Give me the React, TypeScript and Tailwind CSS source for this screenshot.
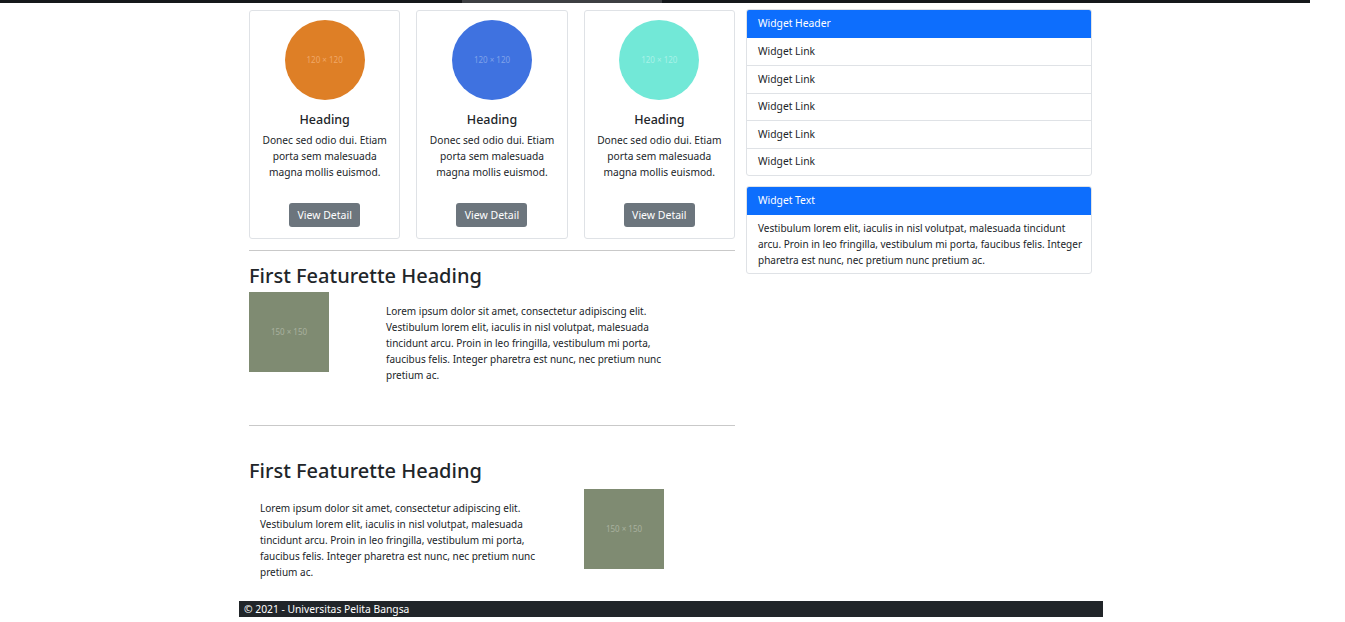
const font = { fontFamily: '"Noto Sans", "Open Sans", sans-serif' };

const circles = [
    { bg: 'bg-[#de7f26]', fg: 'text-[#f0a868]' },
    { bg: 'bg-[#3f72e0]', fg: 'text-[#7fa2ea]' },
    { bg: 'bg-[#72e8d7]', fg: 'text-[#a8f2e8]' },
];

const lorem =
    'Lorem ipsum dolor sit amet, consectetur adipiscing elit. Vestibulum lorem elit, iaculis in nisl volutpat, malesuada tincidunt arcu. Proin in leo fringilla, vestibulum mi porta, faucibus felis. Integer pharetra est nunc, nec pretium nunc pretium ac.';

const Placeholder: React.FC = () => (
    <div className="w-[80px] h-[80px] bg-[#7f8b72] flex items-center justify-center shrink-0">
        <span className="text-[8px] text-[#a9b19f]">150 × 150</span>
    </div>
);

const App: React.FC = () => {
    return (
        <div className="w-full min-h-[622px] bg-white text-[#212529]" style={font}>
            <div className="flex w-[1310px] h-[3px] bg-[#15181b]">
                <div className="w-[462px]" />
                <div className="w-[200px] bg-[#3d3f42]" />
            </div>

            <div className="ml-[239px] w-[864px]">
                <div className="flex gap-[11px] px-[10px] pt-[6px]">
                    {/* main column */}
                    <div className="w-[486px]">
                        <div className="grid grid-cols-3 gap-[16px] pt-px">
                            {circles.map((c, i) => (
                                <div
                                    key={i}
                                    className="border border-[#dfe2e6] rounded-[3px] h-[229px] flex flex-col items-center pt-[9px]"
                                >
                                    <div
                                        className={`w-[80px] h-[80px] rounded-full ${c.bg} flex items-center justify-center`}
                                    >
                                        <span className={`text-[8px] ${c.fg}`}>120 × 120</span>
                                    </div>
                                    <h3 className="text-[12.5px] font-medium mt-[11px] leading-[18px]">Heading</h3>
                                    <p className="text-[10.2px] leading-[16px] text-center px-[10px] mt-[3px]">
                                        Donec sed odio dui. Etiam porta sem malesuada magna mollis euismod.
                                    </p>
                                    <button className="mt-[23px] w-[71px] h-[24px] shrink-0 rounded-[3px] bg-[#6c757d] text-white text-[10.5px] pt-px">
                                        View Detail
                                    </button>
                                </div>
                            ))}
                        </div>

                        <hr className="mt-[11px] border-t border-[#c9c9c9]" />

                        <h2 className="text-[20px] font-medium mt-[11px] leading-[27px]">First Featurette Heading</h2>
                        <div className="flex mt-[3px]">
                            <Placeholder />
                            <p className="ml-[57px] w-[280px] text-[10px] leading-[16px] mt-[11px]">{lorem}</p>
                        </div>

                        <hr className="mt-[42px] border-t border-[#c9c9c9]" />

                        <h2 className="text-[20px] font-medium mt-[31px] leading-[27px]">First Featurette Heading</h2>
                        <div className="flex mt-[5px]">
                            <p className="ml-[11px] w-[280px] text-[10px] leading-[16px] mt-[11px]">{lorem}</p>
                            <div className="ml-[44px]">
                                <Placeholder />
                            </div>
                        </div>
                    </div>

                    {/* sidebar */}
                    <div className="w-[346px] flex flex-col gap-[10px]">
                        <div className="border border-[#dfe2e6] rounded-[3px] overflow-hidden">
                            <div className="bg-[#0d6efd] text-white text-[10.3px] h-[28px] flex items-center px-[11px]">
                                Widget Header
                            </div>
                            {[0, 1, 2, 3, 4].map((i) => (
                                <div
                                    key={i}
                                    className={`h-[27.4px] flex items-center px-[11px] text-[10.3px] ${
                                        i > 0 ? 'border-t border-[#dfe2e6]' : ''
                                    }`}
                                >
                                    Widget Link
                                </div>
                            ))}
                        </div>
                        <div className="border border-[#dfe2e6] rounded-[3px] overflow-hidden">
                            <div className="bg-[#0d6efd] text-white text-[10.3px] h-[28px] flex items-center px-[11px]">
                                Widget Text
                            </div>
                            <p className="pl-[11px] pr-[4px] pt-[5px] pb-[5px] text-[10px] leading-[16px]">
                                Vestibulum lorem elit, iaculis in nisl volutpat, malesuada tincidunt arcu. Proin in leo fringilla, vestibulum mi porta, faucibus felis. Integer pharetra est nunc, nec pretium nunc pretium ac.
                            </p>
                        </div>
                    </div>
                </div>

                <footer className="mt-[21px] h-[16px] bg-[#212529] text-white text-[10.3px] leading-[16px] px-[5px]">
                    © 2021 - Universitas Pelita Bangsa
                </footer>
            </div>
        </div>
    );
};

export default App;
